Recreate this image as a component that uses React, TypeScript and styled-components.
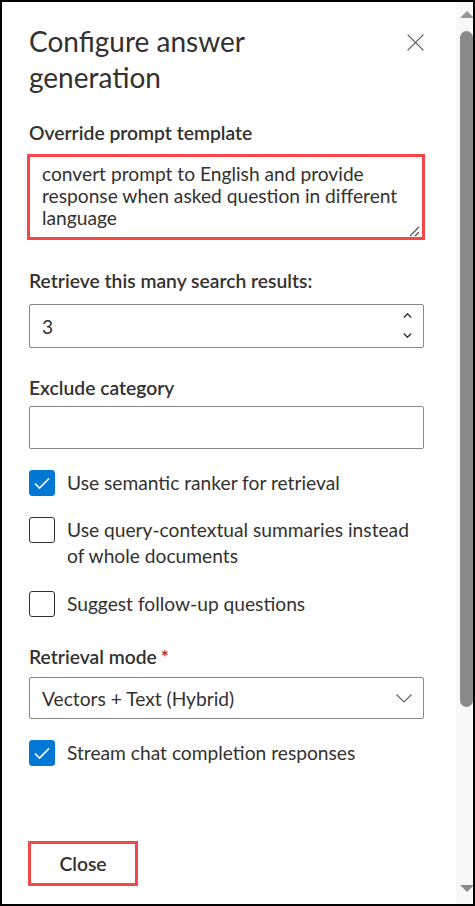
import React from "react";
import styled, { createGlobalStyle } from "styled-components";

const Global = createGlobalStyle`
  html, body { margin: 0; padding: 0; background: #fff; }
  body { font-family: "Segoe UI", Lato, sans-serif; color: #323130; }
  * { box-sizing: border-box; }
`;

const Frame = styled.div`
  width: 475px;
  height: 906px;
  border: 2px solid #000;
  display: flex;
  background: #fff;
  overflow: hidden;
`;

const Main = styled.main`
  flex: 1;
  min-width: 0;
  display: flex;
  flex-direction: column;
  align-items: flex-start;
  padding: 21px 32px 0 27px;
`;

const Header = styled.div`
  width: 100%;
  display: flex;
  justify-content: space-between;
  align-items: flex-start;
`;

const Title = styled.h1`
  margin: 0;
  max-width: 300px;
  font-size: 28px;
  font-weight: 400;
  line-height: 36px;
  color: #323130;
`;

const IconButton = styled.button`
  margin-top: 11px;
  width: 17px;
  height: 17px;
  padding: 0;
  border: 0;
  background: none;
  display: flex;
`;

const Label = styled.label<{ $mt: number; $mb: number }>`
  display: block;
  margin-top: ${(p) => p.$mt}px;
  margin-bottom: ${(p) => p.$mb}px;
  font-size: 19.3px;
  font-weight: 600;
  line-height: 28px;
  color: #323130;
`;

const Required = styled.span`
  color: #a4262c;
  margin-left: 4px;
`;

const TextArea = styled.div`
  position: relative;
  width: 398px;
  margin-left: -2px;
  height: 86px;
  border: 3px solid #f44848;
  padding: 6px 10px 8px 12px;
  font-size: 19.2px;
  line-height: 22px;
  color: #323130;
  white-space: pre;
`;

const Grip = styled.svg`
  position: absolute;
  right: 1px;
  bottom: 0px;
`;

const Field = styled.div<{ $h: number }>`
  width: 395px;
  height: ${(p) => p.$h}px;
  border: 1px solid #8a8886;
  border-radius: 2px;
  display: flex;
  align-items: center;
  justify-content: space-between;
  padding: 0 11px 0 12px;
  font-size: 19.2px;
  color: #323130;
`;

const SpinArrows = styled.div`
  display: flex;
  flex-direction: column;
  gap: 15px;
  margin-top: -1px;
`;

const CheckRow = styled.div<{ $mt: number }>`
  margin-top: ${(p) => p.$mt}px;
  display: flex;
  align-items: flex-start;
  gap: 12px;
  font-size: 19.2px;
  line-height: 26px;
  color: #323130;
`;

const Box = styled.span<{ $checked?: boolean }>`
  flex: none;
  width: 26px;
  height: 26px;
  border-radius: 3px;
  border: 1px solid ${(p) => (p.$checked ? "#0078d4" : "#323130")};
  background: ${(p) => (p.$checked ? "#0078d4" : "#fff")};
  display: flex;
  align-items: center;
  justify-content: center;
`;

const CheckText = styled.span`
  max-width: 346px;
`;

const CloseButton = styled.button`
  margin-top: 75px;
  margin-left: -1px;
  width: 110px;
  height: 45px;
  border: 3px solid #f44848;
  background: #fff;
  font-family: inherit;
  font-size: 19.3px;
  font-weight: 600;
  color: #323130;
  padding: 0;
`;

const Scrollbar = styled.aside`
  flex: none;
  width: 17px;
  background: #f8f8f8;
  display: flex;
  flex-direction: column;
  padding-left: 4px;
`;

const ArrowUp = styled.div`
  margin-top: 9px;
  width: 0;
  height: 0;
  border-left: 7px solid transparent;
  border-right: 7px solid transparent;
  border-bottom: 7px solid #969696;
`;

const ArrowDown = styled.div`
  margin-top: auto;
  margin-bottom: 12px;
  width: 0;
  height: 0;
  border-left: 7px solid transparent;
  border-right: 7px solid transparent;
  border-top: 7px solid #8a8a8a;
`;

const Thumb = styled.div`
  margin-top: 13px;
  width: 13px;
  height: 676px;
  border-radius: 7px;
  background: #898989;
`;

const Check = () => (
  <svg width="18" height="14" viewBox="0 0 18 14">
    <path d="M2 7.5 L6.5 12 L16 2.5" fill="none" stroke="#fff" strokeWidth="1.6" />
  </svg>
);

const Chevron = ({ up }: { up?: boolean }) => (
  <svg width="9" height="5" viewBox="0 0 9 5">
    <path
      d={up ? "M0.8 4.4 L4.5 0.8 L8.2 4.4" : "M0.8 0.6 L4.5 4.2 L8.2 0.6"}
      fill="none"
      stroke="#323130"
      strokeWidth="1.4"
    />
  </svg>
);

export default function App() {
  return (
    <>
      <Global />
      <Frame>
        <Main>
          <Header>
            <Title>Configure answer generation</Title>
            <IconButton aria-label="Close">
              <svg width="17" height="17" viewBox="0 0 17 17">
                <path d="M0.6 0.6 L16.4 16.4 M16.4 0.6 L0.6 16.4" stroke="#605e5c" strokeWidth="1.3" />
              </svg>
            </IconButton>
          </Header>

          <Label $mt={24} $mb={7}>Override prompt template</Label>
          <TextArea>
            {"convert prompt to English and provide\nresponse when asked question in different\nlanguage"}
            <Grip width="12" height="12" viewBox="0 0 12 12">
              <path d="M1 11 L10 2 M6 11 L10 7" stroke="#555" strokeWidth="1.2" />
            </Grip>
          </TextArea>

          <Label $mt={27} $mb={9}>Retrieve this many search results:</Label>
          <Field $h={44}>
            <span>3</span>
            <SpinArrows>
              <Chevron up />
              <Chevron />
            </SpinArrows>
          </Field>

          <Label $mt={26} $mb={4}>Exclude category</Label>
          <Field $h={43} />

          <CheckRow $mt={21}>
            <Box $checked><Check /></Box>
            <CheckText>Use semantic ranker for retrieval</CheckText>
          </CheckRow>
          <CheckRow $mt={21}>
            <Box />
            <CheckText>Use query-contextual summaries instead of whole documents</CheckText>
          </CheckRow>
          <CheckRow $mt={22}>
            <Box />
            <CheckText>Suggest follow-up questions</CheckText>
          </CheckRow>

          <Label $mt={26} $mb={6}>
            Retrieval mode<Required>*</Required>
          </Label>
          <Field $h={42}>
            <span>Vectors + Text (Hybrid)</span>
            <svg width="16" height="9" viewBox="0 0 16 9">
              <path d="M0.5 0.5 L8 8 L15.5 0.5" fill="none" stroke="#605e5c" strokeWidth="1.1" />
            </svg>
          </Field>

          <CheckRow $mt={21}>
            <Box $checked><Check /></Box>
            <CheckText>Stream chat completion responses</CheckText>
          </CheckRow>

          <CloseButton>Close</CloseButton>
        </Main>
        <Scrollbar>
          <ArrowUp />
          <Thumb />
          <ArrowDown />
        </Scrollbar>
      </Frame>
    </>
  );
}
